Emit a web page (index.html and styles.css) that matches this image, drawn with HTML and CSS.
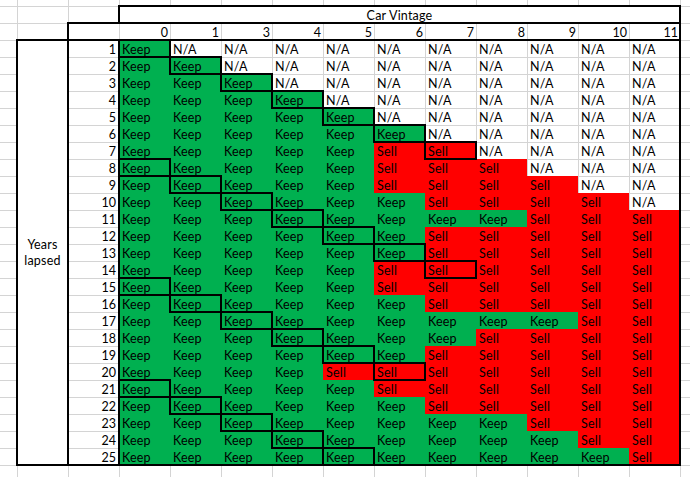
FILE: index.html
```html
<!DOCTYPE html>
<html>
<head>
<meta charset="utf-8">
<link rel="stylesheet" href="styles.css">
</head>
<body>
<div class="sheet">
  <div class="table">
    <div class="vintage box">Car Vintage</div>
    <div class="head box">
      <span></span><span class="num">0</span><span class="num">1</span><span class="num">3</span><span class="num">4</span><span class="num">5</span><span class="num">6</span><span class="num">7</span><span class="num">8</span><span class="num">9</span><span class="num">10</span><span class="num">11</span>
    </div>
    <div class="years box">Years<br>lapsed</div>
    <div class="rownums box">
      <span class="num">1</span><span class="num">2</span><span class="num">3</span><span class="num">4</span><span class="num">5</span><span class="num">6</span><span class="num">7</span><span class="num">8</span><span class="num">9</span><span class="num">10</span><span class="num">11</span><span class="num">12</span><span class="num">13</span><span class="num">14</span><span class="num">15</span><span class="num">16</span><span class="num">17</span><span class="num">18</span><span class="num">19</span><span class="num">20</span><span class="num">21</span><span class="num">22</span><span class="num">23</span><span class="num">24</span><span class="num">25</span>
    </div>
    <div class="data box">
      <span class="k b">Keep</span><span class="n">N/A</span><span class="n">N/A</span><span class="n">N/A</span><span class="n">N/A</span><span class="n">N/A</span><span class="n">N/A</span><span class="n">N/A</span><span class="n">N/A</span><span class="n">N/A</span><span class="n">N/A</span>
      <span class="k">Keep</span><span class="k b">Keep</span><span class="n">N/A</span><span class="n">N/A</span><span class="n">N/A</span><span class="n">N/A</span><span class="n">N/A</span><span class="n">N/A</span><span class="n">N/A</span><span class="n">N/A</span><span class="n">N/A</span>
      <span class="k">Keep</span><span class="k">Keep</span><span class="k b">Keep</span><span class="n">N/A</span><span class="n">N/A</span><span class="n">N/A</span><span class="n">N/A</span><span class="n">N/A</span><span class="n">N/A</span><span class="n">N/A</span><span class="n">N/A</span>
      <span class="k">Keep</span><span class="k">Keep</span><span class="k">Keep</span><span class="k b">Keep</span><span class="n">N/A</span><span class="n">N/A</span><span class="n">N/A</span><span class="n">N/A</span><span class="n">N/A</span><span class="n">N/A</span><span class="n">N/A</span>
      <span class="k">Keep</span><span class="k">Keep</span><span class="k">Keep</span><span class="k">Keep</span><span class="k b">Keep</span><span class="n">N/A</span><span class="n">N/A</span><span class="n">N/A</span><span class="n">N/A</span><span class="n">N/A</span><span class="n">N/A</span>
      <span class="k">Keep</span><span class="k">Keep</span><span class="k">Keep</span><span class="k">Keep</span><span class="k">Keep</span><span class="k b">Keep</span><span class="n">N/A</span><span class="n">N/A</span><span class="n">N/A</span><span class="n">N/A</span><span class="n">N/A</span>
      <span class="k">Keep</span><span class="k">Keep</span><span class="k">Keep</span><span class="k">Keep</span><span class="k">Keep</span><span class="s">Sell</span><span class="s b">Sell</span><span class="n">N/A</span><span class="n">N/A</span><span class="n">N/A</span><span class="n">N/A</span>
      <span class="k b">Keep</span><span class="k">Keep</span><span class="k">Keep</span><span class="k">Keep</span><span class="k">Keep</span><span class="s">Sell</span><span class="s">Sell</span><span class="s">Sell</span><span class="n">N/A</span><span class="n">N/A</span><span class="n">N/A</span>
      <span class="k">Keep</span><span class="k b">Keep</span><span class="k">Keep</span><span class="k">Keep</span><span class="k">Keep</span><span class="s">Sell</span><span class="s">Sell</span><span class="s">Sell</span><span class="s">Sell</span><span class="n">N/A</span><span class="n">N/A</span>
      <span class="k">Keep</span><span class="k">Keep</span><span class="k b">Keep</span><span class="k">Keep</span><span class="k">Keep</span><span class="k">Keep</span><span class="s">Sell</span><span class="s">Sell</span><span class="s">Sell</span><span class="s">Sell</span><span class="n">N/A</span>
      <span class="k">Keep</span><span class="k">Keep</span><span class="k">Keep</span><span class="k b">Keep</span><span class="k">Keep</span><span class="k">Keep</span><span class="k">Keep</span><span class="k">Keep</span><span class="s">Sell</span><span class="s">Sell</span><span class="s">Sell</span>
      <span class="k">Keep</span><span class="k">Keep</span><span class="k">Keep</span><span class="k">Keep</span><span class="k b">Keep</span><span class="k">Keep</span><span class="s">Sell</span><span class="s">Sell</span><span class="s">Sell</span><span class="s">Sell</span><span class="s">Sell</span>
      <span class="k">Keep</span><span class="k">Keep</span><span class="k">Keep</span><span class="k">Keep</span><span class="k">Keep</span><span class="k b">Keep</span><span class="s">Sell</span><span class="s">Sell</span><span class="s">Sell</span><span class="s">Sell</span><span class="s">Sell</span>
      <span class="k">Keep</span><span class="k">Keep</span><span class="k">Keep</span><span class="k">Keep</span><span class="k">Keep</span><span class="s">Sell</span><span class="s b">Sell</span><span class="s">Sell</span><span class="s">Sell</span><span class="s">Sell</span><span class="s">Sell</span>
      <span class="k b">Keep</span><span class="k">Keep</span><span class="k">Keep</span><span class="k">Keep</span><span class="k">Keep</span><span class="s">Sell</span><span class="s">Sell</span><span class="s">Sell</span><span class="s">Sell</span><span class="s">Sell</span><span class="s">Sell</span>
      <span class="k">Keep</span><span class="k b">Keep</span><span class="k">Keep</span><span class="k">Keep</span><span class="k">Keep</span><span class="k">Keep</span><span class="s">Sell</span><span class="s">Sell</span><span class="s">Sell</span><span class="s">Sell</span><span class="s">Sell</span>
      <span class="k">Keep</span><span class="k">Keep</span><span class="k b">Keep</span><span class="k">Keep</span><span class="k">Keep</span><span class="k">Keep</span><span class="k">Keep</span><span class="k">Keep</span><span class="k">Keep</span><span class="s">Sell</span><span class="s">Sell</span>
      <span class="k">Keep</span><span class="k">Keep</span><span class="k">Keep</span><span class="k b">Keep</span><span class="k">Keep</span><span class="k">Keep</span><span class="k">Keep</span><span class="s">Sell</span><span class="s">Sell</span><span class="s">Sell</span><span class="s">Sell</span>
      <span class="k">Keep</span><span class="k">Keep</span><span class="k">Keep</span><span class="k">Keep</span><span class="k b">Keep</span><span class="k">Keep</span><span class="s">Sell</span><span class="s">Sell</span><span class="s">Sell</span><span class="s">Sell</span><span class="s">Sell</span>
      <span class="k">Keep</span><span class="k">Keep</span><span class="k">Keep</span><span class="k">Keep</span><span class="s">Sell</span><span class="s b">Sell</span><span class="s">Sell</span><span class="s">Sell</span><span class="s">Sell</span><span class="s">Sell</span><span class="s">Sell</span>
      <span class="k b">Keep</span><span class="k">Keep</span><span class="k">Keep</span><span class="k">Keep</span><span class="k">Keep</span><span class="s">Sell</span><span class="s">Sell</span><span class="s">Sell</span><span class="s">Sell</span><span class="s">Sell</span><span class="s">Sell</span>
      <span class="k">Keep</span><span class="k b">Keep</span><span class="k">Keep</span><span class="k">Keep</span><span class="k">Keep</span><span class="k">Keep</span><span class="s">Sell</span><span class="s">Sell</span><span class="s">Sell</span><span class="s">Sell</span><span class="s">Sell</span>
      <span class="k">Keep</span><span class="k">Keep</span><span class="k b">Keep</span><span class="k">Keep</span><span class="k">Keep</span><span class="k">Keep</span><span class="k">Keep</span><span class="k">Keep</span><span class="s">Sell</span><span class="s">Sell</span><span class="s">Sell</span>
      <span class="k">Keep</span><span class="k">Keep</span><span class="k">Keep</span><span class="k b">Keep</span><span class="k">Keep</span><span class="k">Keep</span><span class="k">Keep</span><span class="k">Keep</span><span class="k">Keep</span><span class="s">Sell</span><span class="s">Sell</span>
      <span class="k">Keep</span><span class="k">Keep</span><span class="k">Keep</span><span class="k">Keep</span><span class="k b">Keep</span><span class="k">Keep</span><span class="k">Keep</span><span class="k">Keep</span><span class="k">Keep</span><span class="k">Keep</span><span class="s">Sell</span>
    </div>
  </div>
</div>
</body>
</html>
```
FILE: styles.css
```css
html, body {
  margin: 0;
  padding: 0;
  background: #fff;
}

body {
  font-family: Lato, "Liberation Sans", Arial, sans-serif;
  font-size: 12.5px;
  color: #000;
}

.sheet {
  width: 690px;
  height: 477px;
  overflow: hidden;
  box-sizing: border-box;
  padding: 6px 0 0 17px;
  background-color: #fff;
  background-image:
    linear-gradient(to right, #d4d4d4 1px, transparent 1px),
    linear-gradient(to bottom, #d4d4d4 1px, transparent 1px);
  background-size: 51px 100%, 100% 17px;
  background-position: 17px 0, 0 6px;
}

.table {
  display: grid;
  grid-template-columns: repeat(13, 51px);
  grid-template-rows: repeat(27, 17px);
}

.box {
  outline: 2px solid #000;
  outline-offset: -1px;
}

.vintage {
  grid-column: 3 / 14;
  grid-row: 1;
  background: #fff;
  text-align: center;
  box-sizing: border-box;
  padding-top: 2px;
  line-height: 15px;
  letter-spacing: 0.2px;
}

.head {
  grid-column: 2 / 14;
  grid-row: 2;
  display: grid;
  grid-template-columns: repeat(12, 51px);
}

.years {
  grid-column: 1;
  grid-row: 3 / 28;
  background: #fff;
  display: flex;
  align-items: center;
  justify-content: center;
  text-align: center;
  line-height: 15.5px;
  letter-spacing: 0.2px;
}

.rownums {
  grid-column: 2;
  grid-row: 3 / 28;
  display: grid;
  grid-template-rows: repeat(25, 17px);
}

.data {
  grid-column: 3 / 14;
  grid-row: 3 / 28;
  display: grid;
  grid-template-columns: repeat(11, 51px);
  grid-template-rows: repeat(25, 17px);
}

.num,
.data span {
  display: block;
  height: 17px;
  box-sizing: border-box;
  padding: 2px 2px 0 3px;
  line-height: 15px;
  white-space: nowrap;
}

.data span {
  letter-spacing: 0.2px;
}

.num {
  text-align: right;
}

.rownums .num {
  padding-right: 3px;
}

.k {
  background: #00b050;
}

.s {
  background: #ff0000;
}

.b {
  position: relative;
  z-index: 1;
  outline: 2px solid #000;
  outline-offset: -1px;
}
```
